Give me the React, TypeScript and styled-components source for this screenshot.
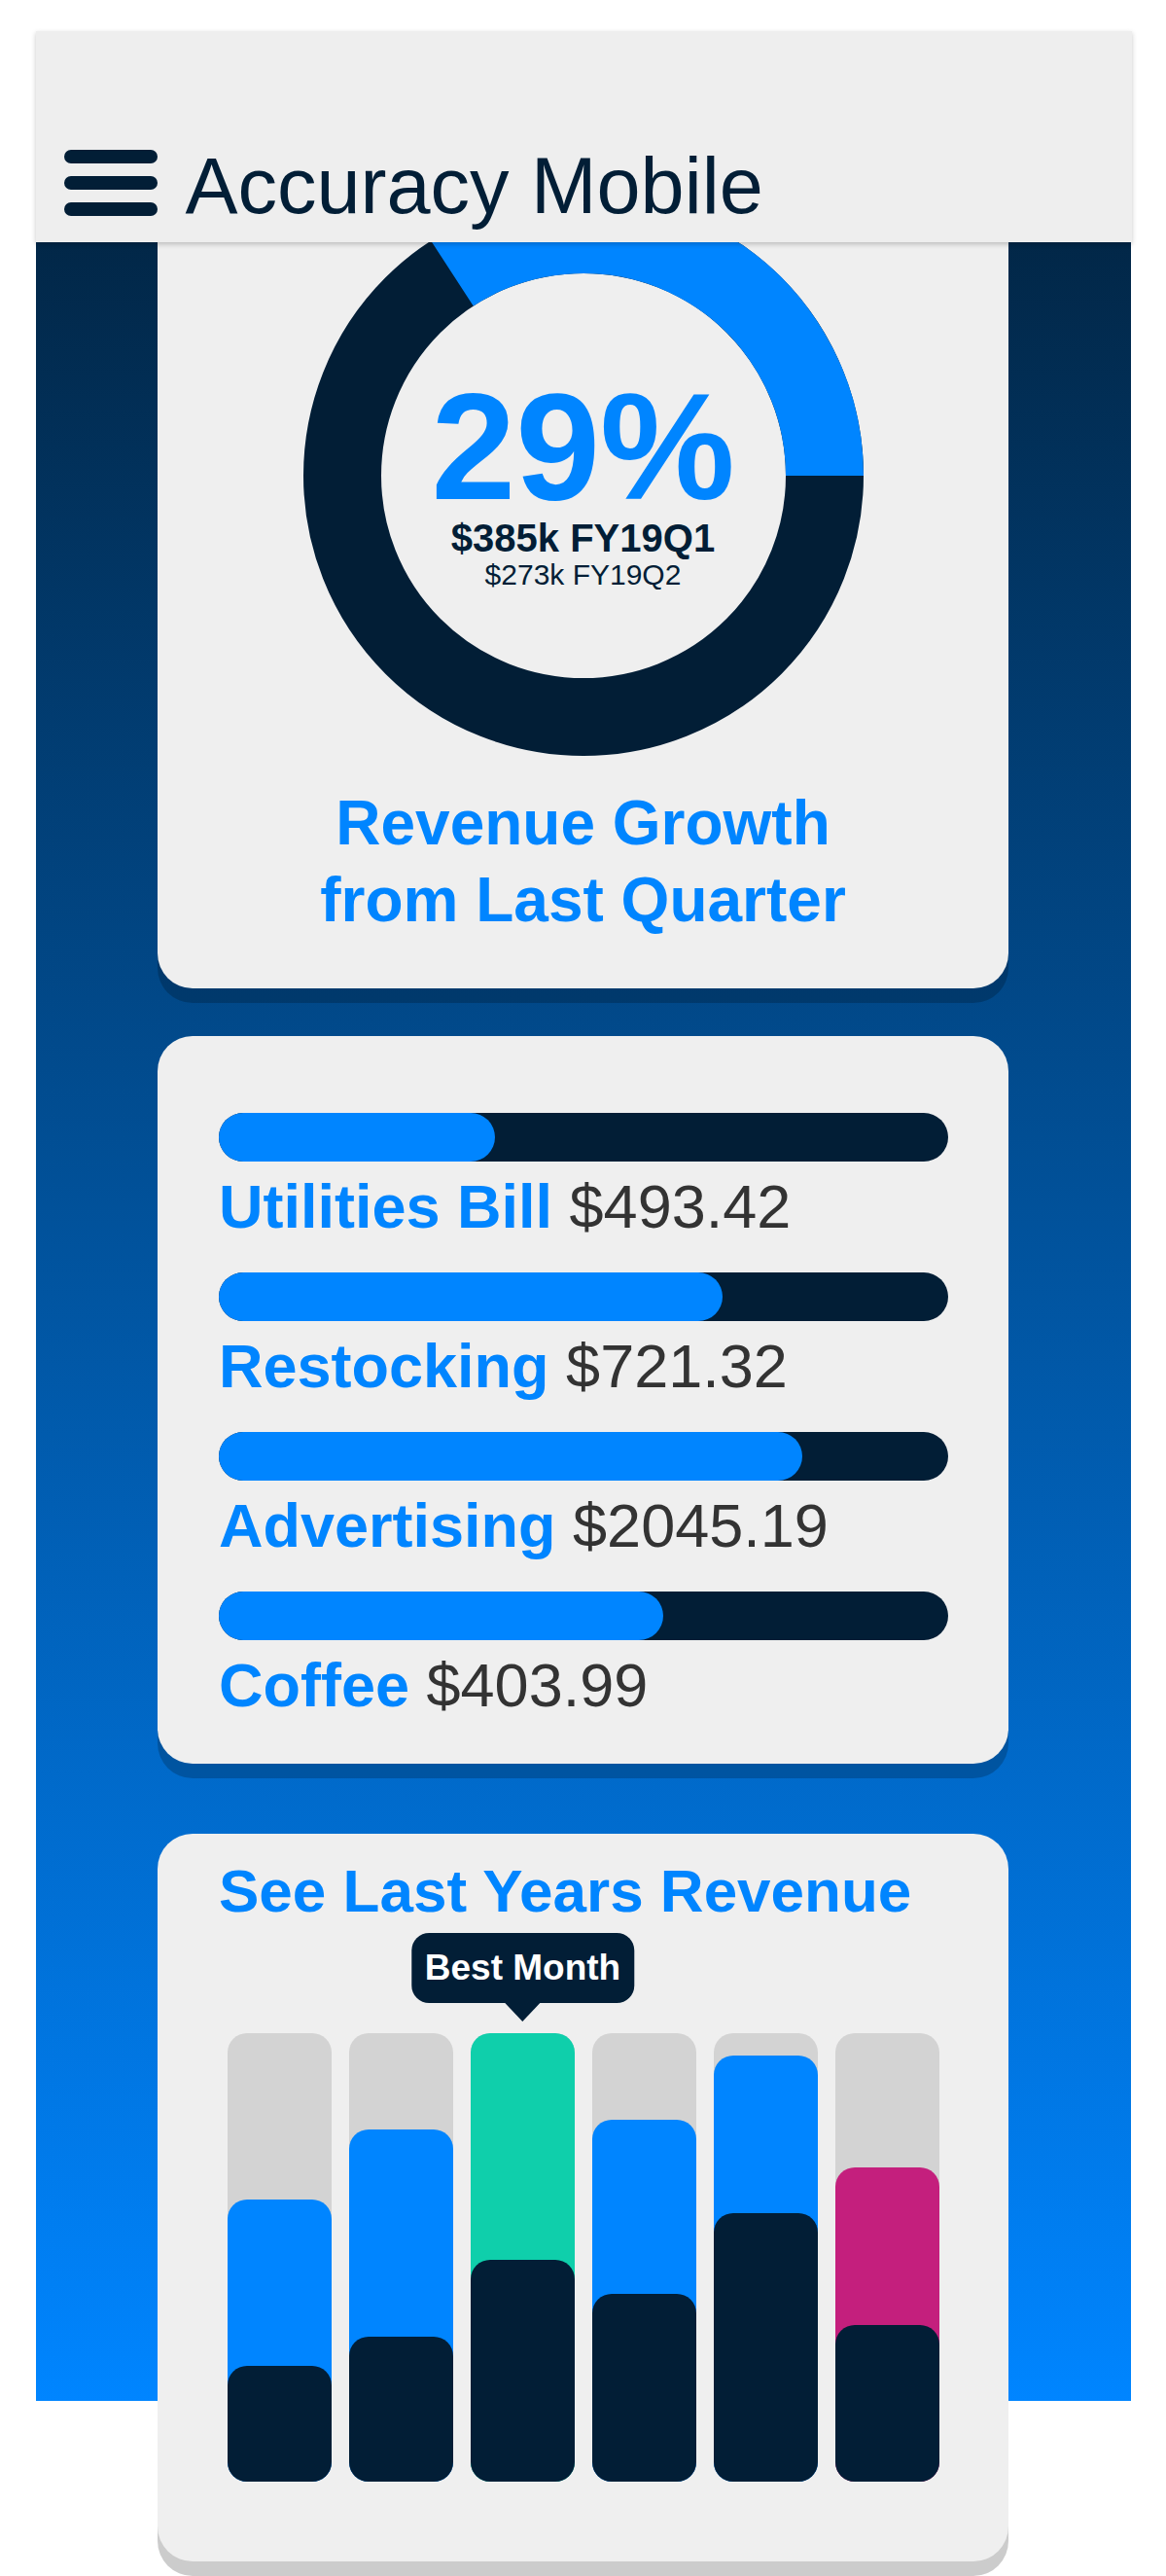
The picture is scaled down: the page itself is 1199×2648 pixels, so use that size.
import React from 'react';
import styled, { createGlobalStyle } from 'styled-components';

const NAVY = '#021e36';
const BLUE = '#0085ff';
const TEAL = '#0fcfab';
const MAGENTA = '#c41f7d';

const GlobalStyle = createGlobalStyle`
  html, body { margin: 0; padding: 0; background: #ffffff; }
  body { font-family: "Liberation Sans", Arial, sans-serif; }
  * { box-sizing: border-box; }
`;

const Page = styled.div`
  position: relative;
  width: 1126px;
  margin: 32px auto 0;
`;

const Header = styled.header`
  position: absolute;
  top: 0;
  left: 0;
  width: 1127px;
  height: 217px;
  z-index: 2;
  background: #eeeeee;
  box-shadow: 0 2px 5px rgba(0, 0, 0, 0.22);
  display: flex;
  align-items: flex-end;
  padding: 0 0 17px 29px;
`;

const HeaderRow = styled.div`
  display: flex;
  align-items: center;
  gap: 29px;
  height: 81px;
`;

const Burger = styled.div`
  display: flex;
  flex-direction: column;
  gap: 13px;
  width: 96px;
  margin-bottom: 7px;
`;

const BurgerLine = styled.span`
  display: block;
  height: 14px;
  border-radius: 7px;
  background: ${NAVY};
`;

const AppTitle = styled.h1`
  margin: 0;
  font-size: 81px;
  line-height: 1;
  font-weight: 400;
  color: ${NAVY};
  white-space: nowrap;
`;

const Main = styled.main`
  padding: 108px 0 15px;
  background: linear-gradient(180deg, ${NAVY} 0%, ${BLUE} 100%) top / 100% 2436px no-repeat;
  display: flex;
  flex-direction: column;
  align-items: center;
  gap: 49px;
`;

const Card = styled.section<{ $mt?: number }>`
  width: 875px;
  flex-shrink: 0;
  background: #efefef;
  border-radius: 36px;
  box-shadow: 0 15px 0 rgba(0, 0, 0, 0.2);
  margin-top: ${(p) => p.$mt ?? 0}px;
`;

const GrowthCard = styled(Card)`
  padding: 61px 0 51px;
  display: flex;
  flex-direction: column;
  align-items: center;
`;

const Donut = styled.div`
  width: 576px;
  height: 576px;
  display: grid;
  grid-template: 100% / 100%;
  & > * {
    grid-area: 1 / 1;
  }
`;

const DonutText = styled.div`
  justify-self: center;
  align-self: start;
  margin-top: 188px;
  display: flex;
  flex-direction: column;
  align-items: center;
  color: ${NAVY};
`;

const Percent = styled.div`
  font-size: 156px;
  line-height: 140px;
  font-weight: 700;
  color: ${BLUE};
`;

const QuarterLine = styled.div<{ $main?: boolean }>`
  font-size: ${(p) => (p.$main ? 40 : 30)}px;
  font-weight: ${(p) => (p.$main ? 700 : 400)};
  line-height: 1;
  margin-top: ${(p) => (p.$main ? 4 : 2.5)}px;
  white-space: nowrap;
`;

const GrowthTitle = styled.h2`
  margin: 30px 0 0;
  font-size: 64px;
  line-height: 79px;
  font-weight: 700;
  color: ${BLUE};
  text-align: center;
`;

const ExpenseCard = styled(Card)`
  padding: 79px 62px 42px 63px;
  display: flex;
  flex-direction: column;
  gap: 29px;
`;

const ExpenseRow = styled.div`
  display: flex;
  flex-direction: column;
`;

const ProgressTrack = styled.div`
  height: 50px;
  border-radius: 25px;
  background: ${NAVY};
  display: flex;
`;

const ProgressFill = styled.div`
  height: 100%;
  border-radius: 25px;
  background: ${BLUE};
`;

const ExpenseLine = styled.div`
  margin-top: 8px;
  font-size: 63px;
  line-height: 77px;
  white-space: nowrap;
`;

const ExpenseLabel = styled.span`
  font-weight: 700;
  color: ${BLUE};
`;

const ExpenseAmount = styled.span`
  font-weight: 400;
  color: #333333;
`;

const ChartCard = styled(Card)`
  padding: 22px 62px 82px 63px;
`;

const ChartTitle = styled.h2`
  margin: 0;
  font-size: 62px;
  line-height: 1.2;
  font-weight: 700;
  color: ${BLUE};
  white-space: nowrap;
`;

const Chart = styled.div`
  margin-top: 109px;
  padding: 0 9px;
  display: grid;
  grid-template-columns: repeat(6, 1fr);
  gap: 18px;
`;

const Column = styled.div`
  position: relative;
`;

const BarTrack = styled.div`
  height: 461px;
  border-radius: 20px;
  background: #d3d3d3;
  display: grid;
  grid-template-rows: 100%;
  grid-template-columns: 100%;
`;

const BarFill = styled.div<{ $color: string }>`
  grid-area: 1 / 1;
  align-self: end;
  border-radius: 20px;
  background: ${(p) => p.$color};
`;

const Tooltip = styled.div`
  position: absolute;
  bottom: calc(100% + 31px);
  left: 50%;
  transform: translateX(-50%);
  height: 72px;
  padding: 0 14px;
  border-radius: 18px;
  background: ${NAVY};
  color: #ffffff;
  font-size: 37px;
  font-weight: 700;
  display: flex;
  align-items: center;
  white-space: nowrap;
  &::after {
    content: '';
    position: absolute;
    top: 100%;
    left: 50%;
    margin-left: -18.5px;
    border-left: 18.5px solid transparent;
    border-right: 18.5px solid transparent;
    border-top: 19px solid ${NAVY};
  }
`;

const expenses = [
  { label: 'Utilities Bill', amount: '$493.42', pct: 37.9 },
  { label: 'Restocking', amount: '$721.32', pct: 69.1 },
  { label: 'Advertising', amount: '$2045.19', pct: 80 },
  { label: 'Coffee', amount: '$403.99', pct: 60.9 },
];

const months = [
  { fill: 62.9, dark: 26.0, color: BLUE },
  { fill: 78.7, dark: 32.5, color: BLUE },
  { fill: 100, dark: 49.5, color: TEAL, best: true },
  { fill: 80.7, dark: 42.0, color: BLUE },
  { fill: 95.0, dark: 59.9, color: BLUE },
  { fill: 70.1, dark: 35.1, color: MAGENTA },
];

export default function App() {
  return (
    <>
      <GlobalStyle />
      <Page>
        <Header>
          <HeaderRow>
            <Burger aria-label="Menu">
              <BurgerLine />
              <BurgerLine />
              <BurgerLine />
            </Burger>
            <AppTitle>Accuracy Mobile</AppTitle>
          </HeaderRow>
        </Header>
        <Main>
          <GrowthCard>
            <Donut>
              <svg width="576" height="576" viewBox="0 0 576 576">
                <circle cx="288" cy="288" r="248" fill="none" stroke={NAVY} strokeWidth="80" />
                <path d="M152.93 80 A248 248 0 0 1 536 288" fill="none" stroke={BLUE} strokeWidth="80" />
              </svg>
              <DonutText>
                <Percent>29%</Percent>
                <QuarterLine $main>$385k FY19Q1</QuarterLine>
                <QuarterLine>$273k FY19Q2</QuarterLine>
              </DonutText>
            </Donut>
            <GrowthTitle>
              Revenue Growth
              <br />
              from Last Quarter
            </GrowthTitle>
          </GrowthCard>

          <ExpenseCard>
            {expenses.map((e) => (
              <ExpenseRow key={e.label}>
                <ProgressTrack>
                  <ProgressFill style={{ width: `${e.pct}%` }} />
                </ProgressTrack>
                <ExpenseLine>
                  <ExpenseLabel>{e.label}</ExpenseLabel> <ExpenseAmount>{e.amount}</ExpenseAmount>
                </ExpenseLine>
              </ExpenseRow>
            ))}
          </ExpenseCard>

          <ChartCard $mt={23}>
            <ChartTitle>See Last Years Revenue</ChartTitle>
            <Chart>
              {months.map((m, i) => (
                <Column key={i}>
                  {m.best && <Tooltip>Best Month</Tooltip>}
                  <BarTrack>
                    <BarFill $color={m.color} style={{ height: `${m.fill}%` }} />
                    <BarFill $color={NAVY} style={{ height: `${m.dark}%` }} />
                  </BarTrack>
                </Column>
              ))}
            </Chart>
          </ChartCard>
        </Main>
      </Page>
    </>
  );
}
